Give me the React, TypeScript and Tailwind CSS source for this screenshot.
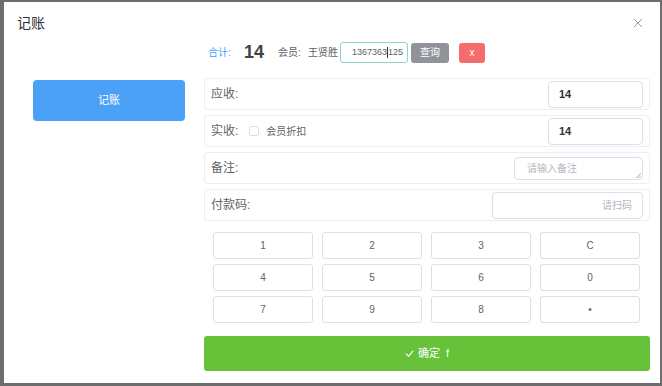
import React from "react";

const keys = ["1", "2", "3", "C", "4", "5", "6", "0", "7", "9", "8", "•"];

export default function App() {
  return (
    <div
      className="w-[662px] h-[386px] bg-[#6e6e6e] pt-[2px] pl-[4px] overflow-hidden"
      style={{ fontFamily: '"Liberation Sans", "Noto Sans CJK SC", sans-serif' }}
    >
      <div className="w-[656px] h-[381px] bg-white relative flex flex-col">
        {/* title */}
        <div className="h-[40px] pl-[13px] pt-[11px] text-[14px] leading-[20px] text-[#303133]">记账</div>
        <button className="absolute right-[15px] top-[15px] w-[12px] h-[12px] text-[#909399]">
          <svg viewBox="0 0 12 12" className="w-[10px] h-[10px]" fill="none" stroke="currentColor" strokeWidth="1.1">
            <path d="M1 1 L11 11 M11 1 L1 11" />
          </svg>
        </button>

        <div className="flex">
          {/* left column */}
          <div className="w-[200px] pl-[29px] pt-[38px]">
            <div className="w-[152px] h-[41px] rounded-[4px] bg-[#4aa1f5] flex items-center justify-center text-white text-[11px]">
              记账
            </div>
          </div>

          {/* right column */}
          <div className="w-[446px] flex flex-col">
            {/* header info */}
            <div className="h-[21px] flex items-center pl-[4px] text-[10px] text-[#606266]">
              <span className="w-[36px] text-[#409eff]">合计:</span>
              <span className="w-[34px] text-[18px] font-bold text-[#444]">14</span>
              <span className="w-[30px]">会员:</span>
              <span className="w-[32px]">王贤胜</span>
              <div className="w-[68px] h-[21px] border border-[#8fd3cf] rounded-[3px] flex items-center pl-[11px] text-[9px] text-[#606266]">
                1367363<span className="inline-block w-px h-[11px] bg-[#333]" />125
              </div>
              <div className="ml-[3px] w-[38px] h-[20px] rounded-[3px] bg-[#909399] text-white text-[10px] flex items-center justify-center">
                查询
              </div>
              <div className="ml-[10px] w-[26px] h-[20px] rounded-[3px] bg-[#f56c6c] text-white text-[10px] flex items-center justify-center">
                x
              </div>
            </div>

            <div className="mt-[15px] flex flex-col gap-[5px]">
              {/* row1 */}
              <div className="h-[32px] border border-[#ebeef5] rounded-[3px] flex items-center justify-between pl-[6px] pr-[6px]">
                <span className="text-[12px] text-[#606266]">应收:</span>
                <div className="w-[95px] h-[27px] border border-[#dcdfe6] rounded-[4px] flex items-center pl-[10px] text-[11px] font-bold text-[#303133]">
                  14
                </div>
              </div>
              {/* row2 */}
              <div className="h-[32px] border border-[#ebeef5] rounded-[3px] flex items-center justify-between pl-[6px] pr-[6px]">
                <div className="flex items-center">
                  <span className="text-[12px] text-[#606266]">实收:</span>
                  <span className="ml-[11px] w-[10px] h-[10px] border border-[#dcdfe6] rounded-[2px]" />
                  <span className="ml-[7px] text-[10px] text-[#606266]">会员折扣</span>
                </div>
                <div className="w-[95px] h-[27px] border border-[#dcdfe6] rounded-[4px] flex items-center pl-[10px] text-[11px] font-bold text-[#303133]">
                  14
                </div>
              </div>
              {/* row3 */}
              <div className="h-[32px] border border-[#ebeef5] rounded-[3px] flex items-center justify-between pl-[6px] pr-[6px]">
                <span className="text-[12px] text-[#606266]">备注:</span>
                <div className="relative w-[129px] h-[23px] border border-[#dcdfe6] rounded-[4px] flex items-center pl-[12px] text-[10px] text-[#b4b8c0]">
                  请输入备注
                  <svg viewBox="0 0 6 6" className="absolute right-[1px] bottom-[1px] w-[6px] h-[6px]" stroke="#888" strokeWidth="0.7">
                    <path d="M1 6 L6 1 M3.5 6 L6 3.5" />
                  </svg>
                </div>
              </div>
              {/* row4 */}
              <div className="h-[32px] border border-[#ebeef5] rounded-[3px] flex items-center justify-between pl-[6px] pr-[6px]">
                <span className="text-[12px] text-[#606266]">付款码:</span>
                <div className="w-[151px] h-[27px] border border-[#dcdfe6] rounded-[4px] flex items-center justify-end pr-[10px] text-[10px] text-[#b4b8c0]">
                  请扫码
                </div>
              </div>
            </div>

            {/* keypad */}
            <div className="mt-[11px] pl-[9px] pr-[10px] grid grid-cols-4 gap-x-[9px] gap-y-[5px]">
              {keys.map((k, i) => (
                <div
                  key={i}
                  className="h-[27px] border border-[#dcdfe6] rounded-[3px] flex items-center justify-center text-[10px] text-[#606266]"
                >
                  {k}
                </div>
              ))}
            </div>

            {/* confirm */}
            <div className="mt-[13px] h-[35px] rounded-[3px] bg-[#67c23a] flex items-center justify-center text-white text-[11px]">
              <svg viewBox="0 0 10 10" className="w-[9px] h-[9px] mr-[4px]" fill="none" stroke="white" strokeWidth="1.2">
                <path d="M1 5.2 L4 8 L9 2" />
              </svg>
              确定<span className="ml-[6px]">f</span>
            </div>
          </div>
        </div>
      </div>
    </div>
  );
}
